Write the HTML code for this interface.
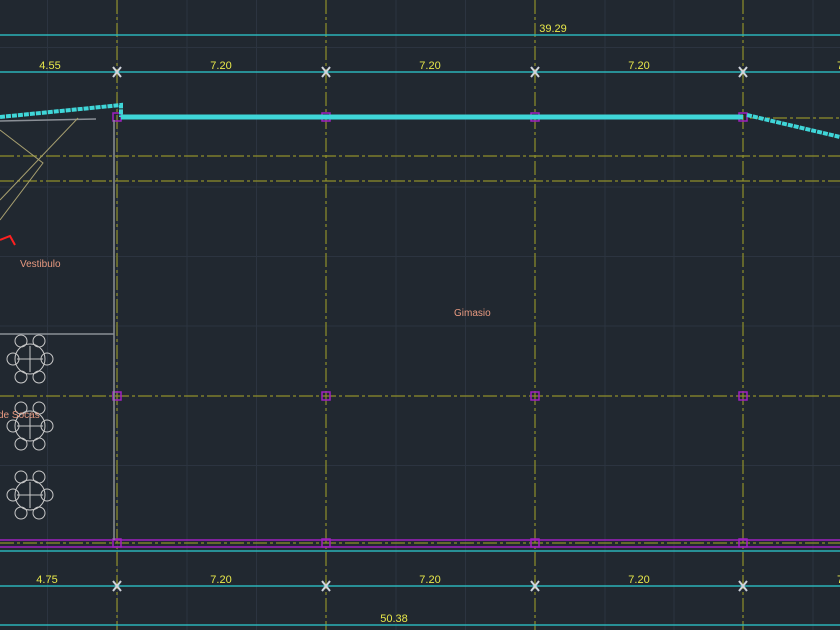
<!DOCTYPE html><html><head><style>html,body{margin:0;padding:0;background:#212830;overflow:hidden}svg{display:block}text{font-family:"Liberation Sans",sans-serif;font-size:11px}</style></head><body>
<svg width="840" height="630" viewBox="0 0 840 630" xmlns="http://www.w3.org/2000/svg">
<rect width="840" height="630" fill="#212830"/>
<g stroke="#2c3440" stroke-width="1">
<path d="M47.5 0V630M117.5 0V630M187 0V630M256.5 0V630M396 0V630M465.5 0V630M605 0V630M674 0V630M813 0V630"/>
<path d="M0 47.5H840M0 187H840M0 256.5H840M0 326H840M0 465.5H840"/>
</g>
<g stroke="#8f8f2a" stroke-width="1.2" stroke-dasharray="14 3 3 3">
<path d="M117 0V630M326 0V630M535 0V630M743 0V630"/>
<path d="M0 156H840M0 181H840M0 396H840M0 543H840M750 118H840"/>
</g>
<g stroke="#2bb3b8" stroke-width="1.6">
<path d="M0 35H840M0 72H840M0 551H840M0 586H840M0 625H840"/>
</g>
<g stroke="#a020c0" stroke-width="1.5" fill="none">
<path d="M0 540H840M0 547H840"/>
<rect x="113" y="113" width="8" height="8"/><rect x="322" y="113" width="8" height="8"/><rect x="531" y="113" width="8" height="8"/><rect x="739" y="113" width="8" height="8"/>
<rect x="113" y="392" width="8" height="8"/><rect x="322" y="392" width="8" height="8"/><rect x="531" y="392" width="8" height="8"/><rect x="739" y="392" width="8" height="8"/>
<rect x="113" y="539" width="8" height="8"/><rect x="322" y="539" width="8" height="8"/><rect x="531" y="539" width="8" height="8"/><rect x="739" y="539" width="8" height="8"/>
</g>
<g stroke="#3fd6d8" fill="none">
<path d="M121 117H743" stroke-width="5"/>
<path d="M747 115L840 137" stroke-width="4" stroke-dasharray="5 1"/>
<path d="M0 117L121 105V117" stroke-width="4" stroke-dasharray="5 1"/>
</g>
<g stroke="#8a8f96" stroke-width="1.5" fill="none">
<path d="M114 120V540M0 334H114M0 121L96 119"/>
<path d="M0 130L43 163L0 220" stroke="#a8a070" stroke-width="1"/>
<path d="M0 200L78 118" stroke="#a8a070" stroke-width="1"/>
</g>
<path d="M0 240L10 236L15 245" stroke="#ff2020" stroke-width="2" fill="none"/>
<g stroke="#c8c8c8" stroke-width="1" fill="none">
<g transform="translate(30,359)"><circle r="15"/><circle cx="-17" r="6"/><circle cx="17" r="6"/><circle cx="-9" cy="-18" r="6"/><circle cx="9" cy="-18" r="6"/><circle cx="-9" cy="18" r="6"/><circle cx="9" cy="18" r="6"/><path d="M-13 0H13M0-13V13"/></g>
<g transform="translate(30,426)"><circle r="15"/><circle cx="-17" r="6"/><circle cx="17" r="6"/><circle cx="-9" cy="-18" r="6"/><circle cx="9" cy="-18" r="6"/><circle cx="-9" cy="18" r="6"/><circle cx="9" cy="18" r="6"/><path d="M-13 0H13M0-13V13"/></g>
<g transform="translate(30,495)"><circle r="15"/><circle cx="-17" r="6"/><circle cx="17" r="6"/><circle cx="-9" cy="-18" r="6"/><circle cx="9" cy="-18" r="6"/><circle cx="-9" cy="18" r="6"/><circle cx="9" cy="18" r="6"/><path d="M-13 0H13M0-13V13"/></g>
</g>
<g stroke="#d0d4dc" stroke-width="2" fill="none">
<path d="M113 67L121 77M121 67L113 77M322 67L330 77M330 67L322 77M531 67L539 77M539 67L531 77M739 67L747 77M747 67L739 77"/>
<path d="M113 581L121 591M121 581L113 591M322 581L330 591M330 581L322 591M531 581L539 591M539 581L531 591M739 581L747 591M747 581L739 591"/>
</g>
<g fill="#e8e84a" text-anchor="middle">
<text x="553" y="32">39.29</text>
<text x="50" y="69">4.55</text><text x="221" y="69">7.20</text><text x="430" y="69">7.20</text><text x="639" y="69">7.20</text><text x="840" y="69">7</text>
<text x="47" y="583">4.75</text><text x="221" y="583">7.20</text><text x="430" y="583">7.20</text><text x="639" y="583">7.20</text><text x="840" y="583">7</text>
<text x="394" y="622">50.38</text>
</g>
<g fill="#e89a80">
<text x="20" y="267" style="font-size:10px">Vestibulo</text>
<text x="454" y="316" style="font-size:10px">Gimasio</text>
<text x="-2" y="418" style="font-size:10px">de Socas</text>
</g>
</svg>
</body></html>
